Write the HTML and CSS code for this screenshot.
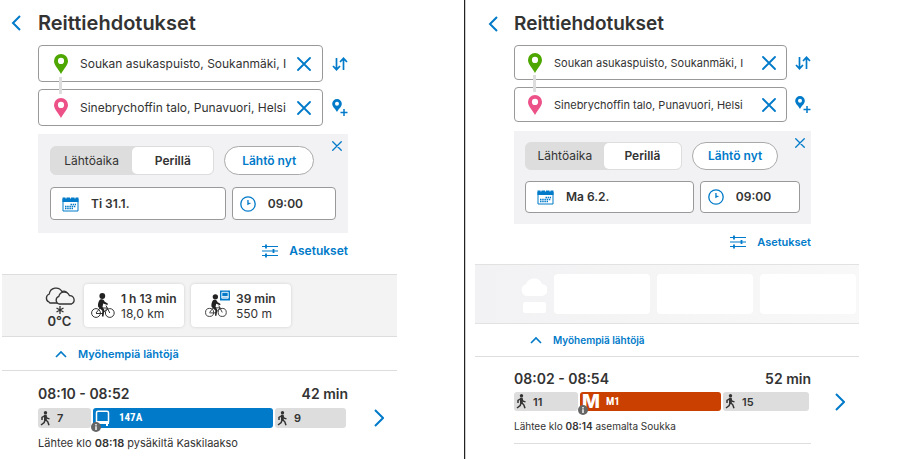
FILE: index.html
```html
<!DOCTYPE html>
<html lang="fi">
<head>
<meta charset="utf-8">
<meta name="viewport" content="width=device-width, initial-scale=1">
<title>Reittiehdotukset</title>
<link rel="stylesheet" href="styles.css">
</head>
<body>
<svg class="sprite" aria-hidden="true">
  <symbol id="chev-left" viewBox="0 0 10 16"><path d="M9 1 2 8l7 7" fill="none" stroke="currentColor" stroke-width="2"/></symbol>
  <symbol id="chev-right" viewBox="0 0 10 18"><path d="m1 1 8 8-8 8" fill="none" stroke="currentColor" stroke-width="2"/></symbol>
  <symbol id="chev-up" viewBox="0 0 12 8"><path d="m1 7 5-5 5 5" fill="none" stroke="currentColor" stroke-width="1.6"/></symbol>
  <symbol id="cross" viewBox="0 0 14 14"><path d="m1 1 12 12M13 1 1 13" fill="none" stroke="currentColor" stroke-width="1.8" stroke-linecap="round"/></symbol>
  <symbol id="pin" viewBox="0 0 14 20"><path fill="currentColor" fill-rule="evenodd" d="M7 0a7 7 0 0 1 7 7c0 4-4 7.500-7 13C4 14.500 0 11 0 7a7 7 0 0 1 7-7Zm0 3.800a3.100 3.100 0 1 0 0 6.200 3.100 3.100 0 0 0 0-6.200Z"/></symbol>
  <symbol id="swap" viewBox="0 0 16 14"><path d="M4.500 1v11.500M1 9l3.500 3.700L8 9M11.500 13V1.500M8 5l3.500-3.700L15 5" fill="none" stroke="currentColor" stroke-width="1.700"/></symbol>
  <symbol id="pin-plus" viewBox="0 0 16 18"><path fill="currentColor" fill-rule="evenodd" d="M5 0a4.800 4.800 0 0 1 4.800 4.800C9.800 7.800 7 9.500 5 13 3 9.500.2 7.800.2 4.800A4.800 4.800 0 0 1 5 0Zm0 2.800a2 2 0 1 0 0 4 2 2 0 0 0 0-4Z"/><path d="M12 10v7M8.500 13.500h7" stroke="currentColor" stroke-width="1.500"/></symbol>
  <symbol id="calendar" viewBox="0 0 17 16"><path d="M1 3h15v12H1z" fill="#fff" stroke="currentColor"/><path d="M.5 1.500h16V6H.5z" fill="currentColor"/><path d="M4 0v2.500M8.500 0v2.500M13 0v2.500" stroke="#fff"/><path d="M8.500 8.500H14M3 10.500h11M3 12.500h8" stroke="currentColor" stroke-width="1.300" stroke-dasharray="1.500 .7"/></symbol>
  <symbol id="clock" viewBox="0 0 16 16"><circle cx="8" cy="8" r="7.200" fill="none" stroke="currentColor" stroke-width="1.300"/><path d="M7.300 4v5.200L11.300 7 8.600 6.800V4Z" fill="currentColor"/></symbol>
  <symbol id="sliders" viewBox="0 0 16 14"><path d="M0 2.500h16M0 7h16M0 11.500h16" stroke="currentColor" stroke-width="1.200"/><path d="M4 .5v4M11.500 5v4M4 9.500v4" stroke="currentColor" stroke-width="1.800"/></symbol>
  <symbol id="clouds" viewBox="0 0 32 18"><g fill="#f3f3f3" stroke="#333" stroke-width="1.300"><path d="M5 15a4.300 4.300 0 0 1 .3-8A6.800 6.800 0 0 1 18 4.600a4.300 4.300 0 0 1 6 4.400L20 16H6Z"/><path d="M15 17a4 4 0 0 1-.2-7.600 5.600 5.600 0 0 1 10.600-.8A4.400 4.400 0 0 1 27.500 17Z"/></g></symbol>
  <symbol id="flake" viewBox="0 0 8 8"><path d="M4 0v8M.5 2l7 4M7.500 2l-7 4" stroke="#333" stroke-width="1.300"/></symbol>
  <symbol id="cloud-blank" viewBox="0 0 26 20"><path fill="#fff" d="M6 20a6 6 0 0 1-1-11.700A8.500 8.500 0 0 1 21 8a6 6 0 0 1-1 12Z"/></symbol>
  <symbol id="cyclist" viewBox="0 0 24 26"><g fill="none" stroke="#333"><circle cx="5" cy="20" r="4.400"/><circle cx="18.800" cy="20" r="4.400"/><path d="m5 20 4-5h7.500l-4.800 5.500H5M15 12.500l3.800 7.500"/></g><circle cx="11.300" cy="3" r="2.900" fill="#222"/><path d="M9.200 6.500c2.500-1 4 .3 4.300 2l3.500 2.300-.6 1.300-4.200-1.600-.7 3.500 1.900 3-.9 6.500h-1.600l.4-5.700-4-3.800c-.8-2 .2-6.300 1.900-7.500Z" fill="#222"/></symbol>
  <symbol id="bus-tile" viewBox="0 0 11 11"><path d="M0 0h11v11H0z" fill="#007ac9"/><path d="M2 2h7v6.500H2z" fill="none" stroke="#fff"/><path d="M2 7h7" stroke="#fff" stroke-width="1.500"/></symbol>
  <symbol id="walker" viewBox="0 0 10 15"><circle cx="5.500" cy="1.700" r="1.700" fill="#333"/><path d="M5.300 4v5M5 4.500 2 6.500v2.500M5.700 5l1.300 2.200 2.500.7M5.200 8.500l-1 3L1 14M5.500 8.500l2.300 2.300L9 14.300" fill="none" stroke="#333" stroke-width="1.500"/><path d="M4 3.700h2.700v5.600H4z" fill="#333"/></symbol>
  <symbol id="bus" viewBox="0 0 15 17"><rect x="1.500" y="1.200" width="12" height="12" rx="1.500" fill="none" stroke="#fff" stroke-width="1.500"/><path d="M1 11h13v3H1z" fill="#fff"/><path d="M3 13v3M12 13v3" stroke="#fff" stroke-width="2"/></symbol>
  <symbol id="info" viewBox="0 0 10 10"><circle cx="5" cy="5" r="5" fill="#666"/><path d="M5 4.300V8M5 1.900v1.500" stroke="#fff" stroke-width="1.400"/></symbol>
</svg>

<main class="compare">
  <section class="screen">
    <header class="top">
      <button class="icon-btn back" aria-label="Takaisin"><svg class="i-back"><use href="#chev-left"/></svg></button>
      <h1>Reittiehdotukset</h1>
    </header>
    <form class="search">
      <div class="place">
        <div class="field">
          <svg class="i-pin from"><use href="#pin"/></svg>
          <input type="text" aria-label="Lähtöpaikka" value="Soukan asukaspuisto, Soukanmäki, I">
          <button type="button" class="icon-btn" aria-label="Tyhjennä lähtöpaikka"><svg class="i-cross"><use href="#cross"/></svg></button>
        </div>
        <button type="button" class="icon-btn" aria-label="Vaihda suunta"><svg class="i-swap"><use href="#swap"/></svg></button>
      </div>
      <div class="place linked">
        <div class="field">
          <svg class="i-pin to"><use href="#pin"/></svg>
          <input type="text" aria-label="Määränpää" value="Sinebrychoffin talo, Punavuori, Helsi">
          <button type="button" class="icon-btn" aria-label="Tyhjennä määränpää"><svg class="i-cross"><use href="#cross"/></svg></button>
        </div>
        <button type="button" class="icon-btn" aria-label="Lisää välipiste"><svg class="i-plus"><use href="#pin-plus"/></svg></button>
      </div>
      <div class="when">
        <button type="button" class="icon-btn close" aria-label="Sulje"><svg class="i-close"><use href="#cross"/></svg></button>
        <div class="when-row modes">
          <div class="segmented">
            <button type="button" aria-pressed="false">Lähtöaika</button>
            <button type="button" aria-pressed="true">Perillä</button>
          </div>
          <button type="button" class="now">Lähtö nyt</button>
        </div>
        <div class="when-row">
          <label class="pick date"><svg class="i-cal"><use href="#calendar"/></svg><input type="text" aria-label="Päivä" value="Ti 31.1."></label>
          <label class="pick time"><svg class="i-clock"><use href="#clock"/></svg><input type="text" aria-label="Aika" value="09:00"></label>
        </div>
      </div>
      <button type="button" class="settings"><svg class="i-sliders"><use href="#sliders"/></svg>Asetukset</button>
    </form>
    <div class="strip">
      <div class="weather">
        <svg class="i-clouds"><use href="#clouds"/></svg>
        <svg class="i-flake"><use href="#flake"/></svg>
        <span>0°C</span>
      </div>
      <button class="alt"><svg class="i-cyclist"><use href="#cyclist"/></svg><span><b>1 h 13 min</b>18,0 km</span></button>
      <button class="alt"><svg class="i-cyclist small"><use href="#cyclist"/></svg><svg class="i-tile"><use href="#bus-tile"/></svg><span><b>39 min</b>550 m</span></button>
    </div>
    <button class="later"><svg class="i-up"><use href="#chev-up"/></svg>Myöhempiä lähtöjä</button>
    <article class="trip">
      <div class="trip-body">
        <div class="times"><span>08:10 - 08:52</span><span>42 min</span></div>
        <div class="legs legs-bus">
          <div class="leg walk"><svg class="i-walk"><use href="#walker"/></svg>7</div>
          <div class="leg bus"><svg class="i-bus"><use href="#bus"/></svg><span class="line">147A</span><svg class="i-info"><use href="#info"/></svg></div>
          <div class="leg walk"><svg class="i-walk"><use href="#walker"/></svg>9</div>
        </div>
        <p>Lähtee klo <b>08:18</b> pysäkiltä Kaskilaakso</p>
      </div>
      <button class="icon-btn more" aria-label="Näytä reitti"><svg class="i-more"><use href="#chev-right"/></svg></button>
    </article>
  </section>

  <section class="screen compact">
    <header class="top">
      <button class="icon-btn back" aria-label="Takaisin"><svg class="i-back"><use href="#chev-left"/></svg></button>
      <h1>Reittiehdotukset</h1>
    </header>
    <form class="search">
      <div class="place">
        <div class="field">
          <svg class="i-pin from"><use href="#pin"/></svg>
          <input type="text" aria-label="Lähtöpaikka" value="Soukan asukaspuisto, Soukanmäki, I">
          <button type="button" class="icon-btn" aria-label="Tyhjennä lähtöpaikka"><svg class="i-cross"><use href="#cross"/></svg></button>
        </div>
        <button type="button" class="icon-btn" aria-label="Vaihda suunta"><svg class="i-swap"><use href="#swap"/></svg></button>
      </div>
      <div class="place linked">
        <div class="field">
          <svg class="i-pin to"><use href="#pin"/></svg>
          <input type="text" aria-label="Määränpää" value="Sinebrychoffin talo, Punavuori, Helsi">
          <button type="button" class="icon-btn" aria-label="Tyhjennä määränpää"><svg class="i-cross"><use href="#cross"/></svg></button>
        </div>
        <button type="button" class="icon-btn" aria-label="Lisää välipiste"><svg class="i-plus"><use href="#pin-plus"/></svg></button>
      </div>
      <div class="when">
        <button type="button" class="icon-btn close" aria-label="Sulje"><svg class="i-close"><use href="#cross"/></svg></button>
        <div class="when-row modes">
          <div class="segmented">
            <button type="button" aria-pressed="false">Lähtöaika</button>
            <button type="button" aria-pressed="true">Perillä</button>
          </div>
          <button type="button" class="now">Lähtö nyt</button>
        </div>
        <div class="when-row">
          <label class="pick date"><svg class="i-cal"><use href="#calendar"/></svg><input type="text" aria-label="Päivä" value="Ma 6.2."></label>
          <label class="pick time"><svg class="i-clock"><use href="#clock"/></svg><input type="text" aria-label="Aika" value="09:00"></label>
        </div>
      </div>
      <button type="button" class="settings"><svg class="i-sliders"><use href="#sliders"/></svg>Asetukset</button>
    </form>
    <div class="strip loading">
      <div class="weather">
        <svg class="i-blank"><use href="#cloud-blank"/></svg>
        <i class="blank-temp"></i>
      </div>
      <div class="blank"></div>
      <div class="blank"></div>
      <div class="blank"></div>
    </div>
    <button class="later"><svg class="i-up"><use href="#chev-up"/></svg>Myöhempiä lähtöjä</button>
    <article class="trip">
      <div class="trip-body">
        <div class="times"><span>08:02 - 08:54</span><span>52 min</span></div>
        <div class="legs legs-metro">
          <div class="leg walk"><svg class="i-walk"><use href="#walker"/></svg>11</div>
          <div class="leg metro"><span class="m-logo">M</span><span class="line">M1</span><svg class="i-info"><use href="#info"/></svg></div>
          <div class="leg walk"><svg class="i-walk"><use href="#walker"/></svg>15</div>
        </div>
        <p>Lähtee klo <b>08:14</b> asemalta Soukka</p>
      </div>
      <button class="icon-btn more" aria-label="Näytä reitti"><svg class="i-more"><use href="#chev-right"/></svg></button>
    </article>
  </section>
</main>
</body>
</html>
```
FILE: styles.css
```css
* { box-sizing: border-box; }

body {
  margin: 0;
  background: #fff;
  color: #333;
  font: 12px/16px Inter, "Liberation Sans", sans-serif;
}

h1, p { margin: 0; }
svg { display: block; flex: none; }
.sprite { position: absolute; width: 0; height: 0; }

button, input { font: inherit; color: inherit; }
button { padding: 0; border: 0; background: none; cursor: pointer; }
input { min-width: 0; padding: 0; border: 0; background: none; outline: 0; }

.icon-btn {
  display: flex;
  align-items: center;
  justify-content: center;
  color: #007ac9;
}

.compare {
  display: grid;
  grid-template-columns: 465fr 455fr;
  min-height: 100vh;
}

.screen {
  --inset-left: 36px;
  --inset-right: 49px;
  --field-height: 37px;
  --pick-height: 33px;
  --mode-height: 29px;
  --space: 12px;
  min-width: 0;
  padding: 11px 67px 0 2px;
  border-right: 1px solid #222;
}

.compact {
  --inset-left: 39px;
  --inset-right: 48px;
  --field-height: 35px;
  --pick-height: 32px;
  --mode-height: 28px;
  --space: 11px;
  padding: 12px 61px 0 9px;
  border-right: 0;
  border-left: 1px solid #ccc;
}

/* Header */
.top { display: flex; align-items: center; height: 24px; }
.back { width: var(--inset-left); padding-right: 9px; }
.compact .back { padding-right: 4px; }
.i-back { width: 10px; height: 16px; }
h1 { font-size: 20px; line-height: 24px; font-weight: 600; }
.compact h1 { font-size: 19px; }

/* Search form */
.search {
  display: flex;
  flex-direction: column;
  padding: 10px var(--inset-right) 0 var(--inset-left);
}
.compact .search { padding-top: 9px; }

.place {
  display: grid;
  grid-template-columns: 1fr 16px;
  gap: 9px;
  height: var(--field-height);
}
.compact .place { gap: 8px; }
.linked { position: relative; margin-top: 7px; }
.linked::before {
  content: "";
  position: absolute;
  left: 21px;
  top: -12px;
  width: 3px;
  height: 17px;
  background: #ddd;
}
.compact .linked::before { left: 19px; }

.field {
  display: flex;
  align-items: center;
  min-width: 0;
  padding: 0 11px 0 15px;
  border: 1px solid #999;
  border-radius: 4px;
}
.compact .field { padding: 0 10px 0 13px; }
.field input { flex: 1; margin: 0 9px 0 12px; }
.compact .field input { font-size: 11px; }
.i-pin { width: 14px; height: 20px; }
.from { color: #4ea700; }
.to { color: #ec5188; }
.i-cross { width: 14px; height: 14px; }
.i-swap { width: 16px; height: 14px; }
.i-plus { width: 16px; height: 18px; }

.when {
  position: relative;
  display: grid;
  gap: var(--space);
  margin-top: 8px;
  padding: var(--space) var(--space) 13px;
  background: #f2f2f4;
}
.compact .when { margin-top: 9px; padding-bottom: 11px; }
.close { position: absolute; top: 5px; right: 4px; width: 14px; height: 14px; }
.i-close { width: 10px; height: 10px; }

.when-row { display: flex; gap: 6px; }
.modes { gap: 10px; padding-right: 22px; }
.segmented {
  display: grid;
  grid-template-columns: 1fr 1fr;
  flex: 165;
  height: var(--mode-height);
  border: 1px solid #ddd;
  border-radius: 6px;
  background: #ddd;
}
.segmented [aria-pressed="true"] {
  border-radius: 5px;
  background: #fff;
  font-weight: 600;
}
.now {
  flex: 89;
  height: var(--mode-height);
  border: 1px solid #aaa;
  border-radius: 16px;
  background: #fff;
  color: #007ac9;
  font-weight: 600;
}

.pick {
  display: flex;
  align-items: center;
  gap: 12px;
  min-width: 0;
  height: var(--pick-height);
  padding-left: 11px;
  border: 1px solid #999;
  border-radius: 4px;
  background: #fff;
  font-weight: 600;
}
.pick input { flex: 1; width: 0; }
.date { flex: 176; }
.time { flex: 103; padding-left: 7px; }
.i-cal { width: 17px; height: 16px; color: #007ac9; }
.i-clock { width: 16px; height: 16px; color: #007ac9; }

.settings {
  display: flex;
  align-items: center;
  align-self: flex-end;
  gap: 11px;
  height: 18px;
  margin: 9px 0 14px;
  color: #007ac9;
  font-weight: 600;
}
.compact .settings { margin-bottom: 13px; font-size: 11px; }
.i-sliders { width: 16px; height: 14px; }

/* Weather and alternative modes */
.strip {
  display: flex;
  gap: 7px;
  height: 63px;
  padding: 9px 0 9px var(--inset-left);
  border: solid #ddd;
  border-width: 1px 0;
  background: #f3f3f3;
}
.weather {
  display: flex;
  flex-direction: column;
  align-items: center;
  width: 39px;
  padding: 3px 0 0 4px;
  font-size: 13px;
  line-height: 14px;
  font-weight: 600;
}
.i-clouds { width: 32px; height: 18px; }
.i-flake { width: 8px; height: 8px; margin-top: 1px; }

.alt {
  display: flex;
  align-items: center;
  gap: 6px;
  width: 100px;
  padding-left: 7px;
  border-radius: 4px;
  background: #fff;
  box-shadow: 0 0 3px #ccc;
  text-align: left;
  line-height: 15px;
}
.alt b { display: block; font-weight: 600; }
.alt span { white-space: nowrap; }
.i-cyclist { width: 24px; height: 26px; }
.small { width: 22px; height: 26px; margin-left: 7px; }
.i-tile { width: 10px; height: 11px; align-self: flex-start; margin: 6px 0 0 -13px; }

.loading {
  height: 60px;
  padding-right: 3px;
  border-color: #e2e2e2;
  background: linear-gradient(90deg, #f2f2f4, #f8f8f8);
}
.loading .weather { width: 33px; padding: 2px 0 0 7px; }
.i-blank { width: 26px; height: 20px; }
.blank-temp { width: 23px; height: 11px; margin-top: 6px; border-radius: 2px; background: #fff; }
.blank { flex: 1; border-radius: 4px; background: #fff; }

.later {
  display: flex;
  align-items: center;
  gap: 11px;
  width: 100%;
  height: 34px;
  padding-left: 53px;
  border-bottom: 1px solid #ddd;
  color: #007ac9;
  font-size: 11px;
  font-weight: 600;
}
.compact .later { height: 33px; padding-left: 55px; font-size: 10px; }
.i-up { width: 12px; height: 8px; }

/* Itinerary */
.trip {
  display: flex;
  align-items: center;
  padding: 13px 0 0 var(--inset-left);
}
.compact .trip { padding-top: 12px; }
.trip-body { flex: 1; min-width: 0; }
.more { width: var(--inset-right); padding-left: 13px; }
.compact .more { padding-left: 10px; }
.i-more { width: 10px; height: 18px; }
.times {
  display: flex;
  justify-content: space-between;
  font-size: 14px;
  line-height: 20px;
  font-weight: 600;
}
.legs {
  display: grid;
  gap: 2px;
  height: 20px;
  margin: 4px 2px 7px 0;
}
.legs-bus { grid-template-columns: 53fr 180fr 71fr; }
.legs-metro { grid-template-columns: 64fr 141fr 86fr; }
.compact .legs { height: 19px; margin-top: 3px; }
.leg {
  position: relative;
  display: flex;
  align-items: center;
  border-radius: 3px;
  color: #fff;
}
.walk {
  gap: 7px;
  padding-left: 2px;
  background: #ddd;
  color: #333;
  font-size: 11px;
  font-weight: 600;
}
.bus { gap: 9px; padding-left: 2px; background: #007ac9; }
.metro { gap: 6px; padding-left: 2px; background: #ca4000; }
.line { font-family: "Roboto Condensed", Roboto, sans-serif; font-size: 11px; font-weight: 700; }
.m-logo { font-size: 19px; line-height: 19px; font-weight: 800; }
.i-walk { width: 10px; height: 15px; }
.i-bus { width: 15px; height: 17px; }
.i-info { position: absolute; left: -2px; bottom: -4px; width: 10px; height: 10px; }
.trip p { font-size: 11px; }
.compact .trip p { font-size: 10px; }
.trip b { font-weight: 600; }
.compact .trip-body { position: relative; }
.compact .trip-body::after {
  content: "";
  position: absolute;
  inset: auto 0 -10px;
  height: 1px;
  background: #ddd;
}
```
